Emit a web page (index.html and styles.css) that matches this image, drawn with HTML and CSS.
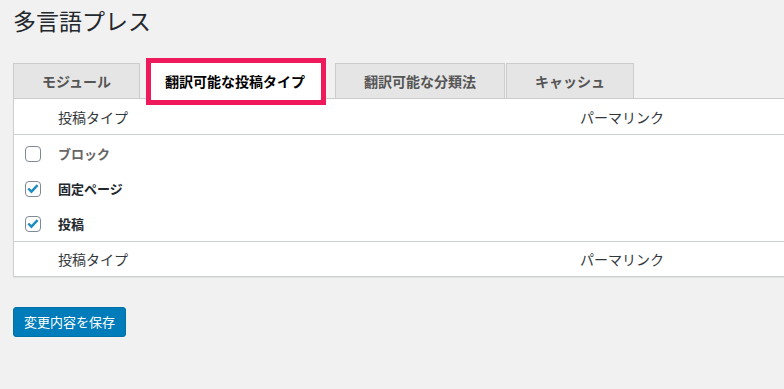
FILE: index.html
```html
<!DOCTYPE html>
<html lang="ja">
<head>
<meta charset="utf-8">
<link rel="stylesheet" href="styles.css">
</head>
<body>
<div class="wrap">
  <h1 class="title">多言語プレス</h1>
  <nav class="tabs">
    <span class="tab">モジュール</span>
    <span class="tab tab-active">翻訳可能な投稿タイプ<span class="highlight"></span></span>
    <span class="tab tab-third">翻訳可能な分類法</span>
    <span class="tab tab-fourth">キャッシュ</span>
  </nav>
  <div class="table">
    <div class="row row-head">
      <div class="cell"></div>
      <div class="cell">投稿タイプ</div>
      <div class="cell">パーマリンク</div>
    </div>
    <div class="body">
      <div class="row row-item">
        <div class="cell"><span class="checkbox"></span></div>
        <div class="cell label label-muted">ブロック</div>
        <div class="cell"></div>
      </div>
      <div class="row row-item">
        <div class="cell"><span class="checkbox"><svg viewBox="0 0 16 16" width="15" height="15"><path d="M2.6 8 L6.2 11.6 L13.2 4.2" fill="none" stroke="#1e8cbe" stroke-width="2.8"/></svg></span></div>
        <div class="cell label">固定ページ</div>
        <div class="cell"></div>
      </div>
      <div class="row row-item">
        <div class="cell"><span class="checkbox"><svg viewBox="0 0 16 16" width="15" height="15"><path d="M2.6 8 L6.2 11.6 L13.2 4.2" fill="none" stroke="#1e8cbe" stroke-width="2.8"/></svg></span></div>
        <div class="cell label">投稿</div>
        <div class="cell"></div>
      </div>
    </div>
    <div class="row row-foot">
      <div class="cell"></div>
      <div class="cell">投稿タイプ</div>
      <div class="cell">パーマリンク</div>
    </div>
  </div>
  <button class="button-primary">変更内容を保存</button>
</div>
</body>
</html>
```
FILE: styles.css
```css
html, body {
  margin: 0;
  padding: 0;
  overflow: hidden;
  background: #f1f1f1;
  font-family: "Noto Sans CJK JP", "Noto Sans", sans-serif;
  color: #32373c;
}
.wrap {
  padding: 5px 0 0 13px;
  margin-right: -20px;
}
.title {
  margin: 0;
  font-size: 23px;
  line-height: 30px;
  font-weight: 400;
  color: #23282d;
}
.tabs {
  display: flex;
  margin-top: 28px;
  border-bottom: 1px solid #ccc;
  height: 35px;
}
.tab {
  position: relative;
  display: block;
  box-sizing: border-box;
  height: 35px;
  padding: 5px 28px;
  font-size: 14px;
  line-height: 24px;
  font-weight: 700;
  color: #555;
  background: #e5e5e5;
  border: 1px solid #ccc;
  border-bottom: none;
  white-space: nowrap;
}
.tab-active {
  margin-left: 7px;
  padding: 5px 17px;
  background: #fff;
  color: #000;
  height: 36px;
  border-color: #fff;
}
.tab-third {
  margin-left: 12px;
}
.tab-fourth {
  margin-left: 1px;
}
.highlight {
  position: absolute;
  left: -2px;
  top: -6px;
  width: 180px;
  height: 47px;
  box-sizing: border-box;
  border: 5px solid #ef1a5c;
}
.table {
  background: #fff;
  border-left: 1px solid #ccd0d4;
  border-bottom: 1px solid #ccd0d4;
  box-shadow: 0 1px 1px rgba(0, 0, 0, 0.05);
}
.row {
  display: grid;
  grid-template-columns: 44px 522px 1fr;
  align-items: center;
}
.row-head, .row-foot {
  height: 35px;
  font-size: 14px;
  color: #32373c;
}
.row-head {
  border-bottom: 1px solid #ccd0d4;
}
.row-foot {
  height: 34px;
  border-top: 1px solid #ccd0d4;
}
.body {
  padding-top: 1px;
}
.row-item {
  height: 35px;
}
.cell {
  display: flex;
  align-items: center;
}
.checkbox {
  margin-left: 11px;
  width: 16px;
  height: 16px;
  box-sizing: border-box;
  border: 1px solid #7e8993;
  border-radius: 4px;
  background: #fff;
  display: flex;
  align-items: center;
  justify-content: center;
}
.label {
  font-size: 13px;
  font-weight: 700;
  color: #23282d;
}
.label-muted {
  color: #666;
}
.button-primary {
  margin-top: 30px;
  height: 30px;
  padding: 0 10px;
  font-family: inherit;
  font-size: 13px;
  line-height: 28px;
  color: #fff;
  background: #007cba;
  border: 1px solid #0071a8;
  border-radius: 3px;
}
```
